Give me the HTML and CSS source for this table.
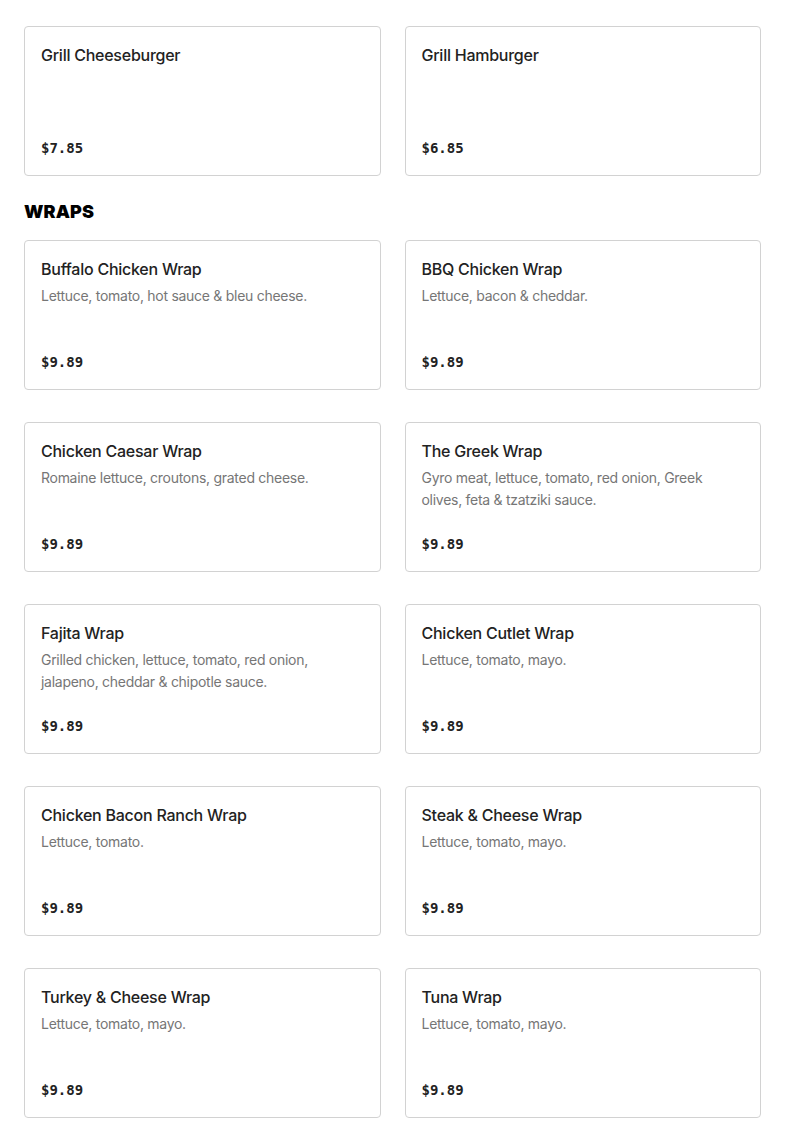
FILE: index.html
```html
<!DOCTYPE html>
<html lang="en">
<head>
<meta charset="utf-8">
<title>Menu</title>
<link rel="stylesheet" href="styles.css">
</head>
<body>
<main class="menu">
  <section class="grid">
    <div class="card"><h3 class="title">Grill Cheeseburger</h3><div class="price">$7.85</div></div>
    <div class="card"><h3 class="title">Grill Hamburger</h3><div class="price">$6.85</div></div>
  </section>
  <h2 class="section-title">WRAPS</h2>
  <section class="grid">
    <div class="card"><h3 class="title">Buffalo Chicken Wrap</h3><p class="desc">Lettuce, tomato, hot sauce &amp; bleu cheese.</p><div class="price">$9.89</div></div>
    <div class="card"><h3 class="title">BBQ Chicken Wrap</h3><p class="desc">Lettuce, bacon &amp; cheddar.</p><div class="price">$9.89</div></div>
    <div class="card"><h3 class="title">Chicken Caesar Wrap</h3><p class="desc">Romaine lettuce, croutons, grated cheese.</p><div class="price">$9.89</div></div>
    <div class="card"><h3 class="title">The Greek Wrap</h3><p class="desc">Gyro meat, lettuce, tomato, red onion, Greek olives, feta &amp; tzatziki sauce.</p><div class="price">$9.89</div></div>
    <div class="card"><h3 class="title">Fajita Wrap</h3><p class="desc">Grilled chicken, lettuce, tomato, red onion, jalapeno, cheddar &amp; chipotle sauce.</p><div class="price">$9.89</div></div>
    <div class="card"><h3 class="title">Chicken Cutlet Wrap</h3><p class="desc">Lettuce, tomato, mayo.</p><div class="price">$9.89</div></div>
    <div class="card"><h3 class="title">Chicken Bacon Ranch Wrap</h3><p class="desc">Lettuce, tomato.</p><div class="price">$9.89</div></div>
    <div class="card"><h3 class="title">Steak &amp; Cheese Wrap</h3><p class="desc">Lettuce, tomato, mayo.</p><div class="price">$9.89</div></div>
    <div class="card"><h3 class="title">Turkey &amp; Cheese Wrap</h3><p class="desc">Lettuce, tomato, mayo.</p><div class="price">$9.89</div></div>
    <div class="card"><h3 class="title">Tuna Wrap</h3><p class="desc">Lettuce, tomato, mayo.</p><div class="price">$9.89</div></div>
  </section>
</main>
</body>
</html>
```
FILE: styles.css
```css
html, body {
  margin: 0;
  padding: 0;
  background: #ffffff;
}
body {
  font-family: Inter, "Noto Sans", "Liberation Sans", sans-serif;
  color: #222222;
}
.menu {
  padding: 26px 24px 0 24px;
}
.grid {
  display: grid;
  grid-template-columns: 1fr 1fr;
  column-gap: 24px;
  row-gap: 32px;
}
.card {
  box-sizing: border-box;
  height: 150px;
  border: 1px solid #d2d2d2;
  border-radius: 4px;
  padding: 16px 16px 18px 16px;
  display: flex;
  flex-direction: column;
}
.title {
  margin: 0;
  font-size: 16px;
  line-height: 24px;
  font-weight: 500;
  letter-spacing: -0.25px;
  color: #222222;
}
.desc {
  margin: 4px 0 0 0;
  font-size: 14px;
  line-height: 22px;
  letter-spacing: -0.28px;
  color: #767676;
}
.price {
  margin-top: auto;
  font-family: "DejaVu Sans Mono", "Liberation Mono", monospace;
  font-weight: 700;
  font-size: 14px;
  line-height: 18px;
  color: #222222;
}
.section-title {
  margin: 24px 0 16px 0;
  font-size: 18px;
  line-height: 24px;
  font-weight: 900;
  color: #000000;
  letter-spacing: 0.1px;
}
```
